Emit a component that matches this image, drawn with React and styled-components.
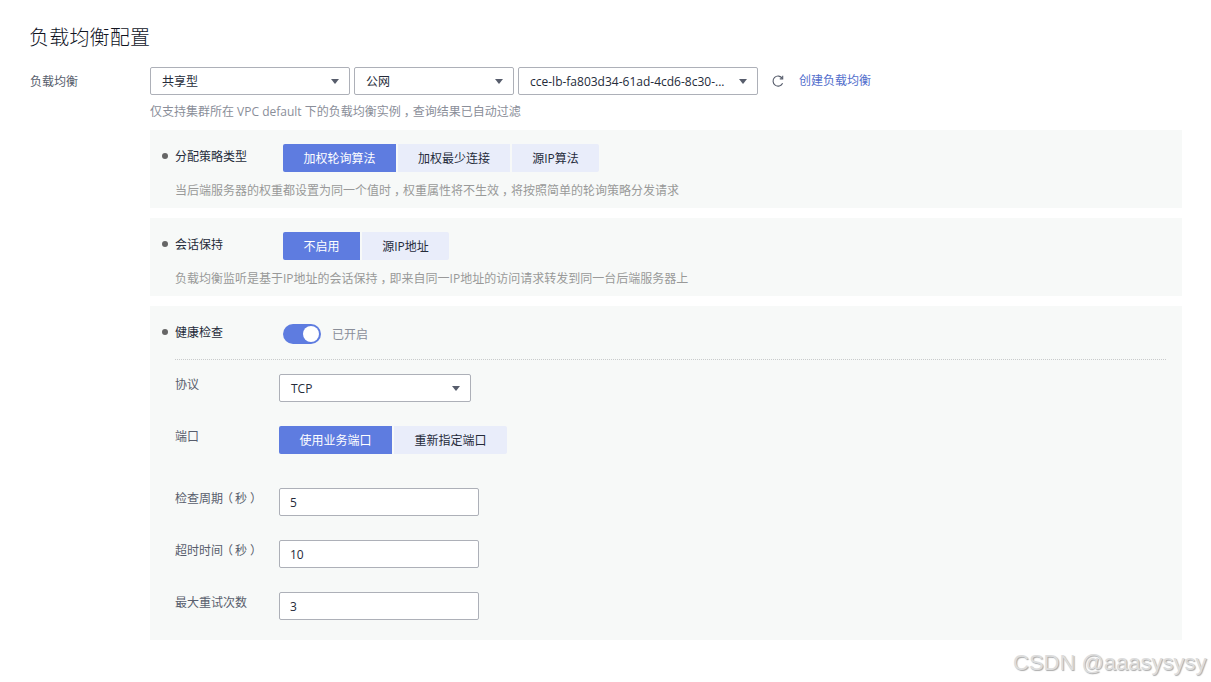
import React from "react";
import styled, { createGlobalStyle } from "styled-components";

const GlobalStyle = createGlobalStyle`
  * { box-sizing: border-box; }
  body {
    margin: 0;
    background: #fff;
    color: #252b3a;
    font: 12px/18px "Open Sans", "Noto Sans CJK SC", sans-serif;
    overflow: hidden;
  }
`;

const Page = styled.main`
  position: relative;
  width: 1211px;
  height: 682px;
  padding: 23px 29px 0 30px;
`;

const Title = styled.h1`
  margin: 0 0 0 -1px;
  height: 30px;
  color: #10141f;
  font-size: 20px;
  line-height: 30px;
  font-weight: 300;
  letter-spacing: 0.2px;
`;

const FormRow = styled.div`
  display: flex;
  margin-top: 14px;
`;

const FormLabel = styled.div`
  width: 120px;
  flex: none;
  padding-top: 6px;
  color: #575d6c;
`;

const FormContent = styled.div`
  flex: 1;
`;

const Controls = styled.div`
  display: flex;
  align-items: center;
  gap: 4px;
  height: 28px;
`;

const SelectBox = styled.div`
  display: flex;
  align-items: center;
  justify-content: space-between;
  width: ${(p) => p.$width}px;
  height: 28px;
  padding: 1px 10px 0 11px;
  border: 1px solid #adb0b8;
  border-radius: 2px;
  background: #fff;
  white-space: nowrap;
`;

const Caret = styled.span`
  width: 0;
  height: 0;
  margin-top: -1px;
  border: 4px solid transparent;
  border-top: 5px solid #575d6c;
  border-bottom: 0;
`;

const RefreshButton = styled.button`
  display: flex;
  width: 14px;
  height: 14px;
  margin-left: 9px;
  padding: 0;
  border: 0;
  background: none;
`;

const Link = styled.a`
  margin-left: 10px;
  color: #526ecc;
`;

const Hint = styled.p`
  height: 19px;
  margin: ${(p) => p.$top}px 0 0;
  padding-top: 1px;
  color: ${(p) => p.$color || "#999"};
  white-space: nowrap;
`;

const Punctuation = styled.span`
  padding: 0 ${(p) => 6 - p.$before}px 0 ${(p) => p.$before}px;
  font-feature-settings: "halt";
`;

const Panels = styled.div`
  display: flex;
  flex-direction: column;
  gap: 10px;
  margin-top: 9px;
`;

const Panel = styled.section`
  height: ${(p) => p.$height}px;
  padding: 14px 15px 0 25px;
  background: #f7f9f8;
`;

const PanelHead = styled.div`
  display: flex;
  height: 28px;
`;

const PanelLabel = styled.div`
  display: flex;
  align-items: center;
  width: 121px;
  height: 18px;
  margin: 4px 0 0 -13px;
  flex: none;

  &::before {
    content: "";
    width: 6px;
    height: 6px;
    margin: -2px 7px 0 0;
    border-radius: 50%;
    background: #666;
  }
`;

const ButtonGroup = styled.div`
  display: flex;
  gap: 2px;
`;

const Option = styled.button`
  height: 28px;
  width: ${(p) => p.$width}px;
  padding: 1px 0 0;
  border: 0;
  background: ${(p) => (p.$active ? "#5e7ce0" : "#e9edfa")};
  color: ${(p) => (p.$active ? "#fff" : "#252b3a")};
  font: inherit;
  white-space: nowrap;

  &:first-child { border-radius: 2px 0 0 2px; }
  &:last-child { border-radius: 0 2px 2px 0; }
`;

const Toggle = styled.span`
  display: flex;
  justify-content: flex-end;
  align-items: center;
  width: 38px;
  height: 20px;
  margin-top: 4px;
  padding: 0 2px;
  border-radius: 10px;
  background: #5e7ce0;

  &::after {
    content: "";
    width: 16px;
    height: 16px;
    border-radius: 50%;
    background: #fff;
  }
`;

const ToggleText = styled.span`
  margin: 6px 0 0 11px;
  color: #8a8e99;
`;

const Divider = styled.div`
  margin-top: 11px;
  height: 1px;
  background: repeating-linear-gradient(to right, #c9cbcc 0 1px, transparent 1px 2px);
`;

const Field = styled.div`
  display: flex;
  height: 28px;
  margin-top: ${(p) => p.$top}px;
`;

const FieldLabel = styled.label`
  width: 104px;
  flex: none;
  padding-top: 2px;
  color: #575d6c;
`;

const Input = styled.input`
  width: 200px;
  height: 28px;
  padding: 1px 10px 0;
  border: 1px solid #adb0b8;
  border-radius: 2px;
  background: #fff;
  color: #252b3a;
  font: inherit;
`;

const Watermark = styled.div`
  position: absolute;
  left: 1013px;
  top: 648px;
  color: #ddd;
  font: 22px/30px "Liberation Sans", Arial, sans-serif;
  white-space: nowrap;
  text-shadow: 1px 1px 1px #aaa;
`;

function Select({ width, children }) {
  return (
    <SelectBox $width={width}>
      <span>{children}</span>
      <Caret />
    </SelectBox>
  );
}

function RefreshIcon() {
  return (
    <svg width="14" height="14" viewBox="0 0 14 14" fill="none" stroke="#575d6c" strokeWidth="1.1">
      <path d="M11.6 9.2A5 5 0 1 1 11.3 4.4" />
      <path d="M11.7 1.8V4.9H8.8" />
    </svg>
  );
}

const Comma = () => <Punctuation $before={3}>，</Punctuation>;

const Seconds = () => (
  <>
    <Punctuation $before={4}>（</Punctuation>秒<Punctuation $before={3}>）</Punctuation>
  </>
);

export default function App() {
  return (
    <>
      <GlobalStyle />
      <Page lang="zh-CN">
        <Title>负载均衡配置</Title>
        <FormRow>
          <FormLabel>负载均衡</FormLabel>
          <FormContent>
            <Controls>
              <Select width={200}>共享型</Select>
              <Select width={160}>公网</Select>
              <Select width={240}>cce-lb-fa803d34-61ad-4cd6-8c30-...</Select>
              <RefreshButton aria-label="刷新"><RefreshIcon /></RefreshButton>
              <Link>创建负载均衡</Link>
            </Controls>
            <Hint $top={7} $color="#8a8e99">
              仅支持集群所在 VPC default 下的负载均衡实例<Comma />查询结果已自动过滤
            </Hint>
            <Panels>
              <Panel $height={78}>
                <PanelHead>
                  <PanelLabel>分配策略类型</PanelLabel>
                  <ButtonGroup>
                    <Option $width={113} $active>加权轮询算法</Option>
                    <Option $width={112}>加权最少连接</Option>
                    <Option $width={87}>源IP算法</Option>
                  </ButtonGroup>
                </PanelHead>
                <Hint $top={9}>
                  当后端服务器的权重都设置为同一个值时<Comma />权重属性将不生效<Comma />将按照简单的轮询策略分发请求
                </Hint>
              </Panel>
              <Panel $height={78}>
                <PanelHead>
                  <PanelLabel>会话保持</PanelLabel>
                  <ButtonGroup>
                    <Option $width={77} $active>不启用</Option>
                    <Option $width={87}>源IP地址</Option>
                  </ButtonGroup>
                </PanelHead>
                <Hint $top={9}>
                  负载均衡监听是基于IP地址的会话保持<Comma />即来自同一IP地址的访问请求转发到同一台后端服务器上
                </Hint>
              </Panel>
              <Panel $height={334}>
                <PanelHead>
                  <PanelLabel>健康检查</PanelLabel>
                  <Toggle />
                  <ToggleText>已开启</ToggleText>
                </PanelHead>
                <Divider />
                <Field $top={14}>
                  <FieldLabel>协议</FieldLabel>
                  <Select width={192}>TCP</Select>
                </Field>
                <Field $top={24}>
                  <FieldLabel>端口</FieldLabel>
                  <ButtonGroup>
                    <Option $width={113} $active>使用业务端口</Option>
                    <Option $width={113}>重新指定端口</Option>
                  </ButtonGroup>
                </Field>
                <Field $top={34}>
                  <FieldLabel>检查周期<Seconds /></FieldLabel>
                  <Input defaultValue="5" />
                </Field>
                <Field $top={24}>
                  <FieldLabel>超时时间<Seconds /></FieldLabel>
                  <Input defaultValue="10" />
                </Field>
                <Field $top={24}>
                  <FieldLabel>最大重试次数</FieldLabel>
                  <Input defaultValue="3" />
                </Field>
              </Panel>
            </Panels>
          </FormContent>
        </FormRow>
        <Watermark>CSDN @aaasysysy</Watermark>
      </Page>
    </>
  );
}
